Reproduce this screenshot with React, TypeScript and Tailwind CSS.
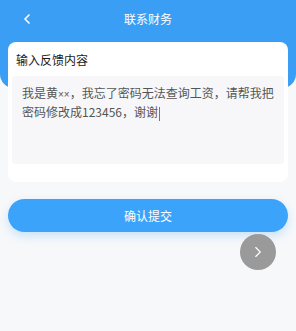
import { ChevronLeft, ChevronRight } from 'lucide-react';

export default function App() {
  return (
    <div
      className="relative w-[296px] h-[331px] bg-[#f7f8fa] overflow-hidden"
      style={{ fontFamily: '"Noto Sans CJK SC", "Noto Sans", sans-serif' }}
    >
      {/* Header */}
      <div className="bg-[#3a9ef5] h-[88px] rounded-b-[14px]">
        <div className="relative flex items-center justify-center h-[38px]">
          <ChevronLeft className="absolute left-[19px] top-[11px] text-white" size={16} strokeWidth={2.5} />
          <span className="text-white text-[12px]">联系财务</span>
        </div>
      </div>

      {/* Card */}
      <div className="mx-2 -mt-[46px] bg-white rounded-[8px] px-1 pb-[18px]">
        <div className="px-1 pt-[8px] pb-[6px] text-[12px] text-[#1a1a1a] leading-[20px]">输入反馈内容</div>
        <div className="bg-[#f7f7f9] rounded-[4px] h-[88px] px-[10px] pt-[8px] text-[12px] leading-[17px] text-[#555]">
          我是黄
          <span className="text-[10px]" style={{ fontFamily: '"Liberation Sans", sans-serif' }}>××</span>
          ，我忘了密码无法查询工资，请帮我把
          <br />
          密码修改成123456，谢谢
          <span className="inline-block w-[1px] h-[14px] bg-[#777] align-middle ml-[1px]" />
        </div>
      </div>

      {/* Submit button */}
      <div className="px-2 mt-[17px]">
        <button className="w-full h-[33px] rounded-full bg-[#3ba3fa] text-white text-[12px] shadow-[0_4px_10px_rgba(59,163,250,0.25)]">
          确认提交
        </button>
      </div>

      {/* Floating next */}
      <div className="flex justify-end pr-[20px] mt-[2px]">
        <div className="w-[36px] h-[36px] rounded-full bg-[#9a9a9a] flex items-center justify-center">
          <ChevronRight className="text-white" size={18} strokeWidth={1.5} />
        </div>
      </div>
    </div>
  );
}
